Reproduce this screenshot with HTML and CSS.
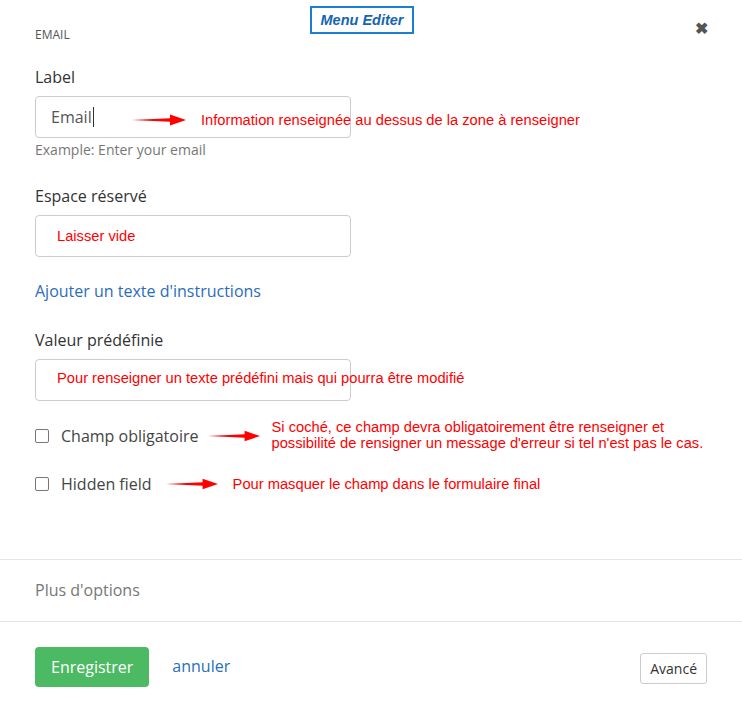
FILE: index.html
```html
<!DOCTYPE html>
<html lang="fr">
<head>
    <meta charset="UTF-8">
    <meta name="viewport" content="width=device-width, initial-scale=1.0">
    <title>Menu Editer</title>
    <link rel="stylesheet" href="styles.css">
</head>
<body>
    <div class="panel">
        <div class="badge">Menu Editer</div>

        <div class="header">
            <span class="type">EMAIL</span>
            <span class="close">&#10006;</span>
        </div>

        <!-- Label -->
        <div class="field">
            <label>Label</label>
            <div class="note-wrap">
                <div class="input">Email<span class="caret"></span></div>
                <div class="note note-label">
                    <svg class="arrow" width="54" height="12" viewBox="0 0 54 12"><polygon points="0,6 38,4.2 38,0.5 54,6 38,11.5 38,7.8" fill="#f00"/></svg>
                    <span>Information renseignée au dessus de la zone à renseigner</span>
                </div>
            </div>
            <div class="help">Example: Enter your email</div>
        </div>

        <!-- Espace réservé -->
        <div class="field field-placeholder">
            <label>Espace réservé</label>
            <div class="input"><span class="red">Laisser vide</span></div>
        </div>

        <a class="link" href="#">Ajouter un texte d'instructions</a>

        <!-- Valeur prédéfinie -->
        <div class="field field-default">
            <label>Valeur prédéfinie</label>
            <div class="note-wrap">
                <div class="input"></div>
                <span class="red note-default">Pour renseigner un texte prédéfini mais qui pourra être modifié</span>
            </div>
        </div>

        <div class="check">
            <span class="box"></span>
            <span class="check-label">Champ obligatoire</span>
            <svg class="arrow" width="52" height="12" viewBox="0 0 54 12"><polygon points="0,6 38,4.2 38,0.5 54,6 38,11.5 38,7.8" fill="#f00"/></svg>
            <span class="red two-lines">Si coché, ce champ devra obligatoirement être renseigner et<br>possibilité de rensigner un message d'erreur si tel n'est pas le cas.</span>
        </div>

        <div class="check">
            <span class="box"></span>
            <span class="check-label">Hidden field</span>
            <svg class="arrow arrow-hidden" width="52" height="12" viewBox="0 0 54 12"><polygon points="0,6 38,4.2 38,0.5 54,6 38,11.5 38,7.8" fill="#f00"/></svg>
            <span class="red">Pour masquer le champ dans le formulaire final</span>
        </div>
    </div>

    <div class="more">Plus d'options</div>

    <div class="footer">
        <button class="save">Enregistrer</button>
        <a class="cancel" href="#">annuler</a>
        <button class="advanced">Avancé</button>
    </div>
</body>
</html>
```

FILE: styles.css
```css
body {
    margin: 0;
    background-color: white;
    font-family: "Open Sans", sans-serif;
    color: #333;
}
.panel {
    position: relative;
    padding: 0 35px 63px 35px;
    border-bottom: 1px solid #e5e5e5;
}
.badge {
    position: absolute;
    top: 6px;
    left: 310px;
    width: 100px;
    height: 24px;
    line-height: 24px;
    text-align: center;
    border: 2px solid #1a7fd0;
    color: #1565b0;
    font-family: "Liberation Sans", Arial, sans-serif;
    font-size: 14.5px;
    font-weight: bold;
    font-style: italic;
}
.header {
    display: flex;
    justify-content: space-between;
    align-items: center;
    padding-top: 24px;
    height: 20px;
}
.type {
    font-size: 12px;
    color: #555;
}
.close {
    font-size: 16px;
    color: #555;
    font-weight: bold;
    margin-right: -1px;
    margin-top: -12px;
}
.field {
    margin-top: 22px;
}
.field-placeholder {
    margin-top: 26px;
}
.field-default {
    margin-top: 27px;
}
label {
    display: block;
    font-size: 16px;
    font-weight: 500;
    margin-bottom: 8px;
}
.note-wrap {
    position: relative;
}
.input {
    box-sizing: border-box;
    width: 316px;
    height: 42px;
    border: 1px solid #ccc;
    border-radius: 4px;
    padding: 0 15px;
    display: flex;
    align-items: center;
    font-size: 16px;
    color: #555;
}
.caret {
    display: inline-block;
    width: 1px;
    height: 20px;
    background-color: #333;
    margin-left: 1px;
}
.red {
    color: #f00;
    font-family: "Liberation Sans", Arial, sans-serif;
    font-size: 14.7px;
}
.input .red {
    margin-left: 6px;
}
.note {
    position: absolute;
    display: flex;
    align-items: center;
    color: #f00;
    font-family: "Liberation Sans", Arial, sans-serif;
    font-size: 14.7px;
}
.note-label {
    top: 16px;
    left: 97px;
}
.note-label .arrow {
    margin-right: 15px;
}
.note-default {
    position: absolute;
    top: 11px;
    left: 22px;
}
.help {
    font-size: 14px;
    color: #777;
    margin-top: 2px;
}
.link {
    display: block;
    margin-top: 23px;
    color: #2a6ebb;
    font-size: 16px;
    text-decoration: none;
}
.check {
    display: flex;
    align-items: center;
    margin-top: 23px;
    height: 24px;
}
.check + .check {
    margin-top: 24px;
}
.box {
    width: 12px;
    height: 12px;
    border: 1px solid #777;
    border-radius: 2px;
    margin-right: 12px;
}
.check-label {
    font-size: 16px;
    color: #444;
}
.check .arrow {
    margin: 0 12px 0 9px;
}
.check .arrow-hidden {
    margin: 0 15px 0 14px;
}
.two-lines {
    line-height: 16px;
    margin-top: -2px;
}
.more {
    padding: 19px 35px 20px 35px;
    font-size: 16px;
    color: #777;
    border-bottom: 1px solid #e5e5e5;
}
.footer {
    display: flex;
    align-items: flex-start;
    padding: 25px 35px;
}
.save {
    background-color: #4cb963;
    color: white;
    border: none;
    border-radius: 4px;
    height: 40px;
    padding: 0 16px;
    font-family: "Open Sans", sans-serif;
    font-size: 16px;
}
.cancel {
    margin-left: 23px;
    margin-top: 8px;
    color: #2a6ebb;
    font-size: 16px;
    text-decoration: none;
}
.advanced {
    margin-left: auto;
    margin-top: 6px;
    background-color: white;
    border: 1px solid #ccc;
    border-radius: 3px;
    height: 31px;
    padding: 0 9px;
    font-family: "Open Sans", sans-serif;
    font-size: 14px;
    color: #333;
}
```
